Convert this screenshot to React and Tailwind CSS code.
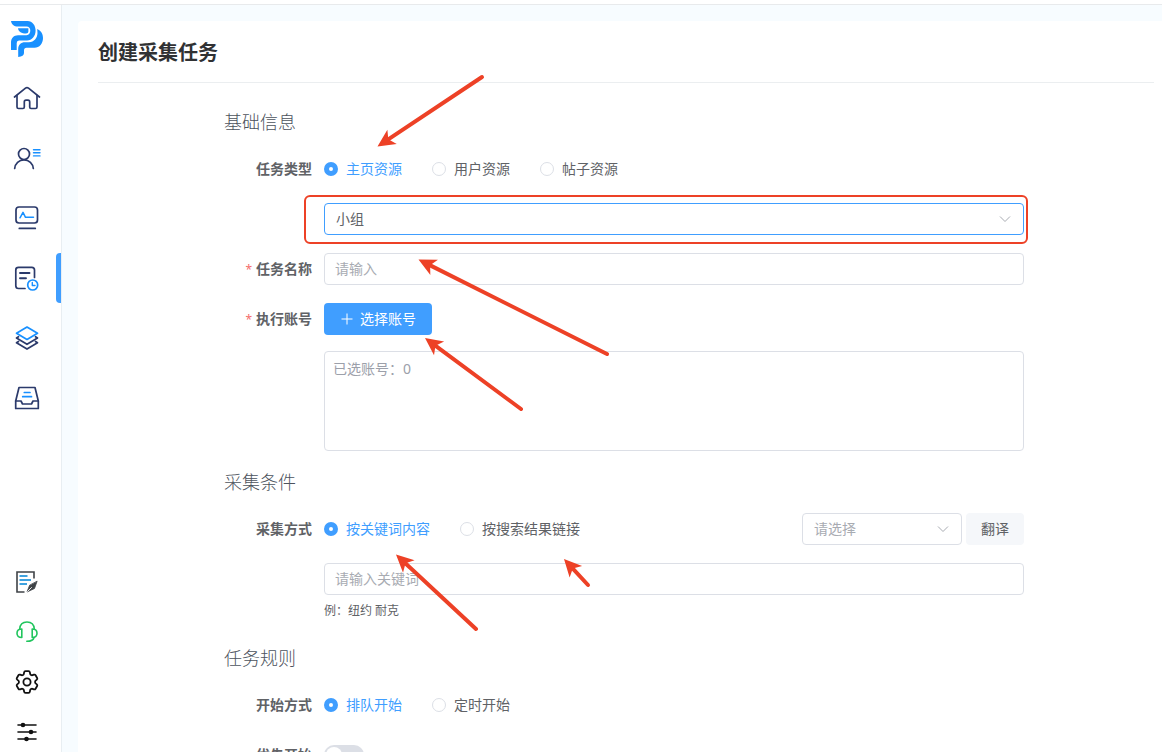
import React, { useState } from "react";
import { HiOutlineCog6Tooth } from "react-icons/hi2";

const NAVY = "#2b3a6b";
const BLUE = "#1890ff";

function Logo() {
  return (
    <svg width="34" height="38" viewBox="10 20 34 38" fill={BLUE}>
      <path d="M11 21H27.5C32.500 21 35.600 25.500 35.600 30.500C35.600 36 32 40.500 27 40.500H19Q16.700 40.500 16.700 43V50H11V42.500C11 38 14 35.200 18 35.200H26.500C29 35.200 30.300 33 30.300 30.800C30.300 28.500 29 26.600 26.500 26.600H18C14 26.600 11.500 24.500 11 21Z" />
      <path d="M18 28.300H28.400V31.500Q28.400 33.600 26 33.600C21.500 33.600 18.600 32 18 28.300Z" />
      <path d="M37.200 29C41 30.500 43 34 43 38C43 43.500 39.500 47.800 34.500 47.800H26.500Q24 47.800 24 50.500V53Q24 56.500 18.200 57V49C18.200 44.800 21 42.300 25 42.300H29C34 42 37.500 38 37.500 33Z" />
    </svg>
  );
}

function NavIcon({ children }) {
  return (
    <svg
      width="30"
      height="30"
      viewBox="0 0 30 30"
      fill="none"
      stroke={NAVY}
      strokeWidth="1.7"
      strokeLinecap="round"
      strokeLinejoin="round"
    >
      {children}
    </svg>
  );
}

function SmallIcon({ children, color = "#111111" }) {
  return (
    <svg
      width="24"
      height="24"
      viewBox="0 0 24 24"
      fill="none"
      stroke={color}
      strokeWidth="1.6"
      strokeLinecap="round"
      strokeLinejoin="round"
    >
      {children}
    </svg>
  );
}

const navItems = [
  {
    name: "home",
    icon: (
      <NavIcon>
        <path d="M2.500 14L13.500 5.200Q15 4 16.500 5.200L27.500 14" />
        <path d="M5 12.500V24Q5 25.500 6.500 25.500H11Q12.300 25.500 12.300 24V19Q12.300 17.200 14 17.200H16Q17.700 17.200 17.700 19V24Q17.700 25.500 19 25.500H23.500Q25 25.500 25 24V12.500" />
      </NavIcon>
    ),
  },
  {
    name: "users",
    icon: (
      <NavIcon>
        <circle cx="12" cy="11" r="5.500" />
        <path d="M2.700 25.500C3 20.500 7 16.800 12 16.800S21 20.500 21.300 25.500" />
        <path d="M21.500 6.700H28M21.500 9.800H28M21.500 12.900H28" stroke={BLUE} strokeWidth="1.400" />
      </NavIcon>
    ),
  },
  {
    name: "monitor",
    icon: (
      <NavIcon>
        <rect x="4" y="4" width="21.500" height="16" rx="3" />
        <path d="M7.300 25.400H23.300" />
        <path d="M8 14.800L11 9.400L13.500 14.300H21.500" stroke={BLUE} strokeWidth="1.500" />
      </NavIcon>
    ),
  },
  {
    name: "tasks",
    active: true,
    icon: (
      <NavIcon>
        <path d="M13 25.500H6.500Q3.800 25.500 3.800 22.800V7Q3.800 4.300 6.500 4.300H19.800Q22.500 4.300 22.500 7V14.500" />
        <path d="M8 10H17.500M8 15.200H14" strokeWidth="1.900" />
        <circle cx="20.700" cy="22" r="5" stroke={BLUE} />
        <path d="M20.300 19.500V22.500H23" stroke={BLUE} strokeWidth="1.400" />
      </NavIcon>
    ),
  },
  {
    name: "layers",
    icon: (
      <NavIcon>
        <path d="M6.500 13.700L4.500 15L15 21.300L25.500 15L23.500 13.700" />
        <path d="M6.500 18.500L4.500 19.800L15 26.100L25.500 19.800L23.500 18.500" />
        <path d="M15 4L25.500 10.200L15 16.500L4.500 10.200Z" stroke={BLUE} />
      </NavIcon>
    ),
  },
  {
    name: "inbox",
    icon: (
      <NavIcon>
        <path d="M7 4.500H23L26.300 18V25.500H3.700V18Z" />
        <path d="M3.700 18H9L10.500 21H19.500L21 18H26.300" />
        <path d="M12.300 9.500H18M10.700 13.700H19.500" stroke={BLUE} />
      </NavIcon>
    ),
  },
];

const bottomItems = [
  {
    name: "notes",
    icon: (
      <SmallIcon color="#3f4347">
        <path d="M19 8.500V2H2V22H9.500" strokeLinecap="butt" strokeLinejoin="miter" />
        <path d="M4.500 6H12.500M4.500 10H16M4.500 14H12" stroke="#3fa2df" strokeLinecap="butt" strokeWidth="1.900" />
        <path d="M22 11.500L19.500 18.500L12 22L14.500 15.500Z" fill="#3f4347" strokeWidth="0.800" />
        <path d="M12.500 21.500L16.500 17.500" stroke="#ffffff" strokeWidth="0.900" />
      </SmallIcon>
    ),
  },
  {
    name: "support",
    icon: (
      <SmallIcon color="#22c55e">
        <path d="M4.700 9C5 4.500 8 2 12 2S19 4.500 19.300 9" />
        <path d="M6.800 9V17.500C3.800 17.500 2 15.800 2 13.200S3.800 9 6.800 9Z" />
        <path d="M17.200 9V17.500C20.200 17.500 22 15.800 22 13.200S20.200 9 17.200 9Z" />
        <path d="M19 17.500C18.500 20 16 21.300 11.800 21.300" />
      </SmallIcon>
    ),
  },
  { name: "settings", icon: <HiOutlineCog6Tooth size={24} viewBox="2 2 20 20" color="#111111" /> },
  {
    name: "filters",
    icon: (
      <SmallIcon>
        <path d="M3 5H21M3 12H21M3 19H21" />
        <g fill="#111111" stroke="none">
          <circle cx="8" cy="5" r="2.300" />
          <circle cx="16" cy="12" r="2.300" />
          <circle cx="11.500" cy="19" r="2.300" />
        </g>
      </SmallIcon>
    ),
  },
];

function Sidebar() {
  return (
    <aside className="flex w-[62px] shrink-0 flex-col border-r border-[#e8eef2] bg-white">
      <a href="#top" aria-label="logo" className="mt-[15px] mb-[10px] ml-[10px] flex">
        <Logo />
      </a>
      <nav className="flex flex-col">
        {navItems.map((item) => (
          <a
            key={item.name}
            href={`#${item.name}`}
            aria-label={item.name}
            className="flex h-[60px] items-center justify-between pl-3"
          >
            {item.icon}
            {item.active && <span className="h-[50px] w-[5px] rounded-l bg-[#409eff]"></span>}
          </a>
        ))}
      </nav>
      <div className="mt-auto flex flex-col gap-[10px] pl-[15px]">
        {bottomItems.map((item) => (
          <button key={item.name} type="button" aria-label={item.name} className="flex h-10 items-center">
            {item.icon}
          </button>
        ))}
      </div>
    </aside>
  );
}

function Row({ label, htmlFor, required, children }) {
  return (
    <div className="mb-[18px] flex">
      <label htmlFor={htmlFor} className="w-[100px] shrink-0 pr-3 text-right text-sm leading-8 font-bold">
        {required && <span className="mr-1 text-xs font-normal text-[#f56c6c]">*</span>}
        {label}
      </label>
      <div className="min-w-0 flex-1">{children}</div>
    </div>
  );
}

function RadioGroup({ name, options, value, onChange }) {
  return (
    <div className="flex h-8 items-center gap-[30px]">
      {options.map((option) => (
        <label
          key={option}
          className={
            option === value
              ? "flex items-center gap-2 text-sm text-[#409eff]"
              : "flex items-center gap-2 text-sm text-[#606266]"
          }
        >
          <input
            type="radio"
            name={name}
            checked={option === value}
            onChange={() => onChange(option)}
            className="size-[14px] appearance-none rounded-full border border-[#dcdfe6] bg-white checked:border-[5px] checked:border-[#409eff]"
          />
          {option}
        </label>
      ))}
    </div>
  );
}

function Chevron() {
  return (
    <svg
      className="pointer-events-none absolute top-[9px] right-3"
      width="14"
      height="14"
      viewBox="0 0 14 14"
      fill="none"
      stroke="#a8abb2"
    >
      <path d="M2 4.500L7 9.500L12 4.500" />
    </svg>
  );
}

function SectionTitle({ children }) {
  return <h2 className="mb-[18px] text-lg leading-[26px] font-light text-[#4c535d]">{children}</h2>;
}

// hand-drawn pointer, tip at x,y and tail at tx,ty
function Arrow({ x, y, tx, ty }) {
  const angle = (Math.atan2(ty - y, tx - x) * 180) / Math.PI;
  const length = Math.hypot(tx - x, ty - y);
  return (
    <g transform={`translate(${x} ${y}) rotate(${angle})`}>
      <path d={`M12 0H${length}`} stroke="#ed4126" strokeWidth="4" strokeLinecap="round" />
      <path d="M0 0L17.500 -8.500L13 0L17.500 8.500Z" fill="#ed4126" />
    </g>
  );
}

function App() {
  const [type, setType] = useState("主页资源");
  const [mode, setMode] = useState("按关键词内容");
  const [start, setStart] = useState("排队开始");

  return (
    <div className="relative flex h-screen flex-col overflow-hidden bg-white font-['Noto_Sans','Noto_Sans_CJK_SC',sans-serif] text-[#606266]">
      <header className="h-[5px] shrink-0 border-b border-[#e8eaec]"></header>
      <div className="flex min-h-0 flex-1">
        <Sidebar />
        <main className="min-w-0 flex-1 overflow-hidden bg-[#f7fcff] pt-4 pl-4">
          <div className="rounded-tl bg-white pr-2 pl-5">
            <h1 className="border-b border-[#ebeef0] pt-[17px] pb-[14px] text-xl leading-[30px] font-bold text-[#303133]">
              创建采集任务
            </h1>
            <form className="mr-1 pt-[26px]" onSubmit={(e) => e.preventDefault()}>
              <div className="mx-auto max-w-[800px]">
                <SectionTitle>基础信息</SectionTitle>
                <Row label="任务类型">
                  <RadioGroup
                    name="type"
                    options={["主页资源", "用户资源", "帖子资源"]}
                    value={type}
                    onChange={setType}
                  />
                  <div className="relative mt-[18px]">
                    <select
                      aria-label="资源类型"
                      className="block h-8 w-full appearance-none rounded border border-[#409eff] bg-white px-[11px] text-sm outline-none"
                    >
                      <option>小组</option>
                    </select>
                    <Chevron />
                    <div className="pointer-events-none absolute -top-2 -right-1 -bottom-[9px] -left-5 rounded-[6px] border-2 border-[#ed4126]"></div>
                  </div>
                </Row>
                <Row label="任务名称" htmlFor="name" required>
                  <input
                    id="name"
                    placeholder="请输入"
                    className="block h-8 w-full rounded border border-[#dcdfe6] px-[10px] pb-[2px] text-sm placeholder:text-[#a8abb2]"
                  />
                </Row>
                <Row label="执行账号" htmlFor="account" required>
                  <button
                    id="account"
                    type="button"
                    className="flex h-8 items-center gap-[6px] rounded bg-[#409eff] px-4 text-sm text-white"
                  >
                    <svg width="14" height="14" viewBox="0 0 14 14" stroke="currentColor">
                      <path d="M7 1.500V12.500M1.500 7H12.500" />
                    </svg>
                    选择账号
                  </button>
                  <div className="mt-4 h-[100px] rounded border border-[#dcdfe6] px-2 pt-[7px] text-sm text-[#9ca0aa]">
                    已选账号：0
                  </div>
                </Row>

                <SectionTitle>采集条件</SectionTitle>
                <Row label="采集方式">
                  <div className="flex justify-between">
                    <RadioGroup
                      name="mode"
                      options={["按关键词内容", "按搜索结果链接"]}
                      value={mode}
                      onChange={setMode}
                    />
                    <div className="flex gap-1">
                      <div className="relative w-40">
                        <select
                          aria-label="语言"
                          className="block h-8 w-full appearance-none rounded border border-[#dcdfe6] bg-white px-[11px] text-sm text-[#a8abb2]"
                        >
                          <option>请选择</option>
                        </select>
                        <Chevron />
                      </div>
                      <button type="button" className="h-8 rounded bg-[#f5f7fa] px-[15px] text-sm">
                        翻译
                      </button>
                    </div>
                  </div>
                  <input
                    aria-label="关键词"
                    placeholder="请输入关键词"
                    className="mt-[18px] block h-8 w-full rounded border border-[#dcdfe6] px-[10px] pb-[2px] text-sm placeholder:text-[#a8abb2]"
                  />
                  <p className="text-xs leading-8">例：纽约 耐克</p>
                </Row>

                <SectionTitle>任务规则</SectionTitle>
                <Row label="开始方式">
                  <RadioGroup
                    name="start"
                    options={["排队开始", "定时开始"]}
                    value={start}
                    onChange={setStart}
                  />
                </Row>
                <Row label="优先开始" htmlFor="priority">
                  <div className="flex h-8 items-center">
                    <input
                      id="priority"
                      type="checkbox"
                      role="switch"
                      className="h-5 w-10 appearance-none rounded-full bg-[#dcdfe6] p-[2px] before:block before:size-4 before:rounded-full before:bg-white checked:bg-[#409eff] checked:before:ml-5"
                    />
                  </div>
                </Row>
              </div>
            </form>
          </div>
        </main>
      </div>
      <svg
        className="pointer-events-none absolute top-0 left-0"
        width="1162"
        height="752"
        viewBox="0 0 1162 752"
        fill="none"
      >
        <Arrow x={377.5} y={146.5} tx={482} ty={77} />
        <Arrow x={418.5} y={259.5} tx={607} ty={354} />
        <Arrow x={425} y={338} tx={521} ty={409} />
        <Arrow x={396} y={554.500} tx={476} ty={629} />
        <Arrow x={564} y={559} tx={588} ty={585} />
      </svg>
    </div>
  );
}

export default App;
